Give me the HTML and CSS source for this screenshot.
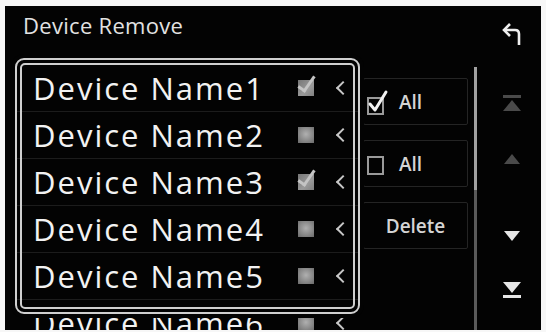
FILE: index.html
```html
<!DOCTYPE html>
<html>
<head>
<meta charset="utf-8">
<link rel="stylesheet" href="styles.css">
</head>
<body>
<div class="screen">
  <div class="header">
    <div class="title">Device Remove</div>
    <svg class="back" width="24" height="24" viewBox="0 0 24 24">
      <path d="M19 23 V12 Q19 8 15 8 H4" fill="none" stroke="#eee" stroke-width="2.6"/>
      <path d="M10 2 L4 8 L10 14" fill="none" stroke="#eee" stroke-width="2.6"/>
    </svg>
  </div>
  <div class="body">
    <div class="list">
      <div class="row"><span class="name">Device Name1</span><span class="chk on"></span><span class="chev"></span></div>
      <div class="row"><span class="name">Device Name2</span><span class="chk off"></span><span class="chev"></span></div>
      <div class="row"><span class="name">Device Name3</span><span class="chk on"></span><span class="chev"></span></div>
      <div class="row"><span class="name">Device Name4</span><span class="chk off"></span><span class="chev"></span></div>
      <div class="row"><span class="name">Device Name5</span><span class="chk off"></span><span class="chev"></span></div>
      <div class="row"><span class="name">Device Name6</span><span class="chk off"></span><span class="chev"></span></div>
      <div class="frame"><div class="frame-inner"></div></div>
    </div>
    <div class="buttons">
      <div class="btn">
        <svg class="bicon" width="24" height="26" viewBox="0 0 24 26">
          <rect x="2" y="9" width="15" height="16" fill="none" stroke="#9a9a9a" stroke-width="2"/>
          <path d="M4 15 L9 21 L20 3" fill="none" stroke="#f2f2f2" stroke-width="3" stroke-linejoin="round" stroke-linecap="round"/>
        </svg>
        <span class="blabel">All</span>
      </div>
      <div class="btn">
        <svg class="bicon" width="24" height="26" viewBox="0 0 24 26">
          <rect x="2" y="6" width="15" height="17" fill="none" stroke="#9a9a9a" stroke-width="2"/>
        </svg>
        <span class="blabel">All</span>
      </div>
      <div class="btn center"><span class="blabel">Delete</span></div>
    </div>
    <div class="scroll"><div class="thumb"></div></div>
    <div class="nav">
      <svg class="top" width="20" height="18" viewBox="0 0 20 18"><rect x="1" y="1" width="18" height="3" fill="#4a4a4a"/><path d="M1 17 L19 17 L10 6 Z" fill="#4a4a4a"/></svg>
      <svg class="up" width="20" height="12" viewBox="0 0 20 12"><path d="M2 11 L18 11 L10 1 Z" fill="#4a4a4a"/></svg>
      <svg class="down" width="20" height="12" viewBox="0 0 20 12"><path d="M2 1 L18 1 L10 11 Z" fill="#e6e6e6"/></svg>
      <svg class="bottom" width="20" height="18" viewBox="0 0 20 18"><path d="M1 1 L19 1 L10 12 Z" fill="#e6e6e6"/><rect x="1" y="14" width="18" height="3" fill="#e6e6e6"/></svg>
    </div>
  </div>
</div>
</body>
</html>
```

FILE: styles.css
```css
html, body {
  margin: 0;
  padding: 0;
  background: #f7f7f7;
}
body {
  width: 546px;
  height: 332px;
  overflow: hidden;
  font-family: "Open Sans", "DejaVu Sans", sans-serif;
}
.screen {
  margin: 6px 0 0 5px;
  width: 536px;
  height: 324px;
  background: #030303;
  overflow: hidden;
  display: flex;
  flex-direction: column;
}
.header {
  height: 46px;
  flex: none;
  display: flex;
  align-items: flex-start;
  justify-content: space-between;
  padding: 5px 17px 0 18px;
  box-sizing: border-box;
}
.title {
  font-size: 22px;
  line-height: 28px;
  letter-spacing: 0.3px;
  color: #e2e2e2;
}
.back {
  margin-top: 11px;
}
.body {
  flex: 1;
  display: flex;
  align-items: flex-start;
}
.list {
  position: relative;
  width: 346px;
  margin-left: 9px;
  padding-top: 13px;
  flex: none;
}
.row {
  height: 47px;
  display: flex;
  align-items: center;
  padding: 0 12px 0 19px;
  border-bottom: 1px solid #1c1c1c;
  box-sizing: border-box;
}
.name {
  flex: 1;
  font-size: 31px;
  line-height: 47px;
  color: #f2f2f2;
  letter-spacing: 2px;
  white-space: nowrap;
}
.chk {
  width: 16px;
  height: 16px;
  margin-right: 21px;
  position: relative;
  background: radial-gradient(circle at 50% 45%, #b0b0b0 0%, #8a8a8a 55%, #6a6a6a 100%);
}
.chk.on {
  background: linear-gradient(135deg, #777 0%, #9a9a9a 60%, #808080 100%);
}
.chk.on::after {
  content: "";
  position: absolute;
  left: 4px;
  top: -7px;
  width: 6px;
  height: 16px;
  border-right: 3px solid #c4c4c4;
  border-bottom: 3px solid #c4c4c4;
  transform: rotate(35deg);
}
.chev {
  width: 8px;
  height: 8px;
  border-left: 2px solid #c8c8c8;
  border-bottom: 2px solid #c8c8c8;
  transform: rotate(45deg);
  margin-left: 3px;
}
.frame {
  position: absolute;
  left: 1px;
  top: 6px;
  width: 345px;
  height: 256px;
  box-sizing: border-box;
  border: 2px solid #cfcfcf;
  border-radius: 9px;
  box-shadow: 0 0 0 4px #030303;
  padding: 3px;
}
.frame-inner {
  width: 100%;
  height: 100%;
  box-sizing: border-box;
  border: 2px solid #cfcfcf;
  border-radius: 5px;
}
.buttons {
  width: 105px;
  margin-left: 3px;
  padding-top: 26px;
  display: flex;
  flex-direction: column;
  gap: 15px;
  flex: none;
}
.btn {
  height: 47px;
  box-sizing: border-box;
  border: 1px solid #242424;
  border-radius: 2px;
  display: flex;
  align-items: center;
  padding-left: 2px;
}
.btn.center {
  justify-content: center;
  padding-left: 0;
}
.bicon {
  flex: none;
}
.blabel {
  margin-left: 9px;
  font-size: 19px;
  font-weight: 600;
  color: #d4d4d4;
}
.btn.center .blabel {
  margin-left: 0;
}
.scroll {
  width: 3px;
  margin-left: 6px;
  margin-top: 15px;
  height: 270px;
  background: #5a5a5a;
  flex: none;
}
.thumb {
  height: 123px;
  background: #a0a0a0;
}
.nav {
  margin-left: 25px;
  width: 20px;
  display: flex;
  flex-direction: column;
  align-items: center;
  flex: none;
}
.nav .top { margin-top: 42px; }
.nav .up { margin-top: 41px; }
.nav .down { margin-top: 65px; }
.nav .bottom { margin-top: 39px; }
```
